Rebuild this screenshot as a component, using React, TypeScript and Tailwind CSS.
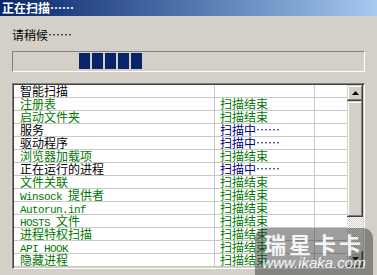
import React from "react";

const GREEN = "text-[#007800]";
const BLACK = "text-black";
const NAVY = "text-[#000070]";

type Row = { name: string; nameCls: string; status: string; statusCls: string };

const DONE = "扫描结束";
const BUSY = "扫描中……";

const ROWS: Row[] = [
  { name: "智能扫描", nameCls: BLACK, status: "", statusCls: BLACK },
  { name: "注册表", nameCls: GREEN, status: DONE, statusCls: GREEN },
  { name: "启动文件夹", nameCls: GREEN, status: DONE, statusCls: GREEN },
  { name: "服务", nameCls: BLACK, status: BUSY, statusCls: NAVY },
  { name: "驱动程序", nameCls: BLACK, status: BUSY, statusCls: NAVY },
  { name: "浏览器加载项", nameCls: GREEN, status: DONE, statusCls: GREEN },
  { name: "正在运行的进程", nameCls: BLACK, status: BUSY, statusCls: NAVY },
  { name: "文件关联", nameCls: GREEN, status: DONE, statusCls: GREEN },
  { name: "Winsock 提供者", nameCls: GREEN, status: DONE, statusCls: GREEN },
  { name: "Autorun.inf", nameCls: GREEN, status: DONE, statusCls: GREEN },
  { name: "HOSTS 文件", nameCls: GREEN, status: DONE, statusCls: GREEN },
  { name: "进程特权扫描", nameCls: GREEN, status: DONE, statusCls: GREEN },
  { name: "API HOOK", nameCls: GREEN, status: DONE, statusCls: GREEN },
  { name: "隐藏进程", nameCls: GREEN, status: DONE, statusCls: GREEN },
];

const RAISED =
  "bg-[#d4d0c8] shadow-[inset_-1px_-1px_#404040,inset_1px_1px_#d4d0c8,inset_-2px_-2px_#808080,inset_2px_2px_#ffffff]";

// SimSun draws latin as half-width; mimic with a narrow mono run
function Mixed({ text }: { text: string }) {
  const parts = text.match(/[\x20-\x7e]+|[^\x20-\x7e]+/g) ?? [];
  return (
    <>
      {parts.map((p, i) =>
        /^[\x20-\x7e]+$/.test(p) ? (
          <span key={i} className="font-['Liberation_Mono',monospace] text-[11px] leading-[12px] tracking-[-0.6px] whitespace-pre">
            {p}
          </span>
        ) : (
          <span key={i}>{p}</span>
        )
      )}
    </>
  );
}

function Arrow({ up }: { up?: boolean }) {
  return (
    <svg width="7" height="4" viewBox="0 0 7 4">
      <polygon points={up ? "3.5,0 7,4 0,4" : "0,0 7,0 3.5,4"} fill="#000" />
    </svg>
  );
}

export default function App() {
  return (
    <div className="relative w-[377px] h-[275px] overflow-hidden bg-[#d4d0c8] font-['Noto_Sans_CJK_SC',sans-serif] text-[12px] leading-[12px]">
      {/* Title bar */}
      <div className="h-4 flex items-center pl-[2px] bg-linear-to-r from-[#0a246a] to-[#a6caf0] text-white font-bold">
        正在扫描……
      </div>

      <div className="pl-[12px] pr-[12px]">
        <div className="mt-[13px] text-black">请稍候……</div>

        {/* Progress */}
        <div className="mt-[10px] h-[21px] w-[353px] border border-t-[#808080] border-l-[#808080] border-b-white border-r-white pt-px">
          <div className="ml-[66px] flex gap-[2px]">
            {[0, 1, 2, 3, 4].map((i) => (
              <div key={i} className="w-[11px] h-[16px] bg-[#0a246a]" />
            ))}
          </div>
        </div>

        {/* List */}
        <div className="mt-[11px] w-[353px] h-[186px] p-[2px] flex shadow-[inset_1px_1px_#808080,inset_-1px_-1px_#ffffff,inset_2px_2px_#404040,inset_-2px_-2px_#d4d0c8]">
          <div className="flex-1 bg-white">
            {ROWS.map((r) => (
              <div key={r.name} className="h-[13px] flex border-b border-[#c8c8c8]">
                <div className={`w-[201px] pl-[6px] border-r border-[#c8c8c8] whitespace-nowrap ${r.nameCls}`}>
                  <Mixed text={r.name} />
                </div>
                <div className={`w-[100px] pl-[5px] border-r border-[#c8c8c8] whitespace-nowrap ${r.statusCls}`}>
                  {r.status}
                </div>
                <div className="flex-1" />
              </div>
            ))}
          </div>

          {/* Scrollbar */}
          <div className="w-4 flex flex-col">
            <div className={`h-4 flex items-center justify-center ${RAISED}`}>
              <Arrow up />
            </div>
            <div className={`h-[116px] ${RAISED}`} />
            <div className="flex-1 bg-[image:repeating-conic-gradient(#ffffff_0%_25%,#d4d0c8_0%_50%)] bg-[length:2px_2px]" />
            <div className={`h-4 flex items-center justify-center ${RAISED}`}>
              <Arrow />
            </div>
          </div>
        </div>
      </div>

      {/* Watermark */}
      <div className="absolute left-[255px] top-[228px] w-[118px] h-[60px] rounded-[10px] bg-[rgba(40,40,40,0.45)] flex flex-col items-center pt-[4px]">
        <div className="text-[22px] leading-[22px] font-bold tracking-[3px] text-white/90">瑞星卡卡</div>
        <div className="mt-[1px] font-['Liberation_Sans',sans-serif] italic text-[15px] leading-[15px] text-white/90">
          www.ikaka.com
        </div>
      </div>
    </div>
  );
}
